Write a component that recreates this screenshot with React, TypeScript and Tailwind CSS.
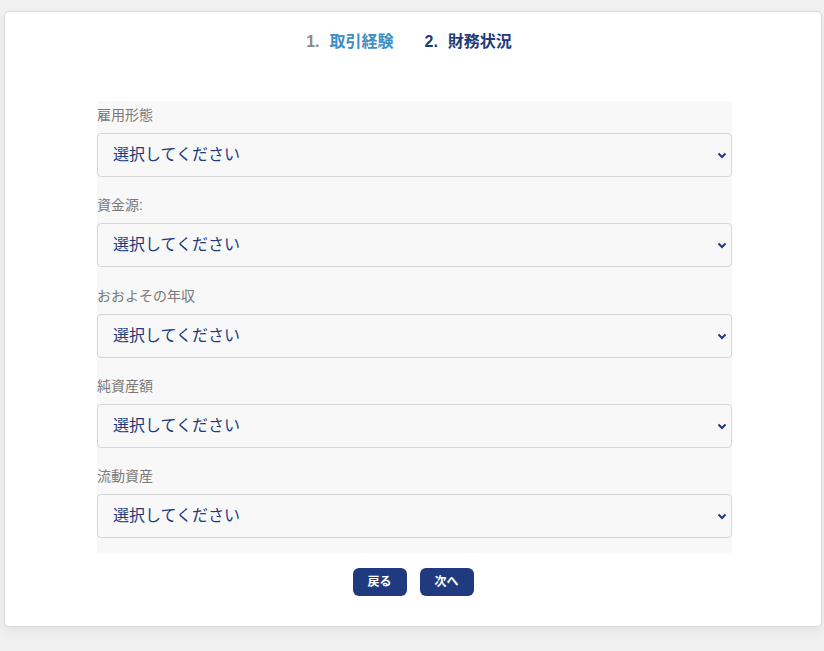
import React, { useState } from 'react';

const fields = ['雇用形態', '資金源:', 'おおよその年収', '純資産額', '流動資産'];

const Chevron = () => (
  <svg className="pointer-events-none absolute right-[5px] top-1/2 -translate-y-1/2" width="10" height="10" viewBox="0 0 10 10">
    <path d="M1.5 3.5 L5 7 L8.5 3.5" fill="none" stroke="#1e3a7a" strokeWidth="2" />
  </svg>
);

export default function App() {
  const [values, setValues] = useState<string[]>(fields.map(() => ''));

  return (
    <div className="min-h-[651px] w-[824px] bg-[#f0f0f0] px-[4px] pt-[11px] font-['Helvetica','Liberation_Sans','Noto_Sans_CJK_JP',sans-serif]">
      <div className="h-[616px] w-[818px] rounded-[5px] border border-[#d9dbe0] bg-white shadow-[0_4px_10px_rgba(0,0,0,0.06)]">
        {/* step indicator */}
        <div className="flex justify-center gap-[31px] pr-[8px] pt-[19px] text-[16px] font-bold leading-[22px]">
          <div>
            <span className="text-[#8a8a8a]">1.</span>
            <span className="ml-[10px] text-[#3d8ec3]">取引経験</span>
          </div>
          <div className="text-[#1f3a7a]">
            <span>2.</span>
            <span className="ml-[10px]">財務状況</span>
          </div>
        </div>

        <div className="ml-[92px] mt-[48px] flex w-[635px] flex-col gap-[18.25px] bg-[#f8f8f8] pb-[15px] pt-[4px]">
          {fields.map((label, i) => (
            <div key={label}>
              <div className="h-[28px] text-[14px] leading-[20px] text-[#7a7a7a]">{label}</div>
              <div className="relative">
                <select
                  value={values[i]}
                  onChange={(e) => setValues(values.map((v, j) => (j === i ? e.target.value : v)))}
                  className="h-[44px] w-full appearance-none rounded-[4px] border border-[#d6d6d6] bg-[#f8f8f8] pl-[15px] text-[16px] text-[#1e3a7a] outline-none"
                >
                  <option value="">選択してください</option>
                </select>
                <Chevron />
              </div>
            </div>
          ))}
        </div>

        <div className="mt-[15px] flex justify-center gap-[13px]">
          <button className="h-[28px] w-[54px] rounded-[6px] bg-[#1f3a7f] text-[12px] font-bold text-white">戻る</button>
          <button className="h-[28px] w-[54px] rounded-[6px] bg-[#1f3a7f] text-[12px] font-bold text-white">次へ</button>
        </div>
      </div>
    </div>
  );
}
